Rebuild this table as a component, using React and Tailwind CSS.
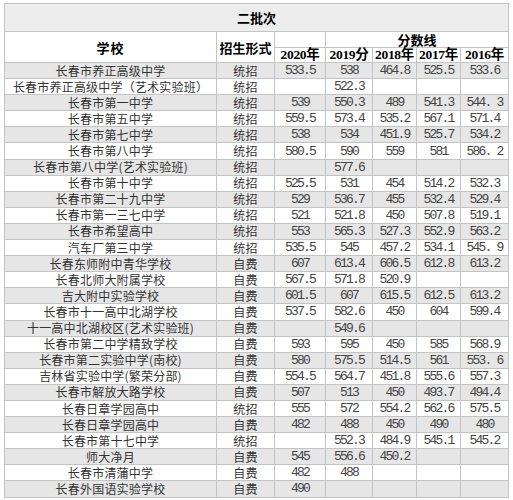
const rows = [
  ["长春市养正高级中学", "统招", "533.5", "538", "464.8", "525.5", "533.6"],
  ["长春市养正高级中学（艺术实验班）", "统招", "", "522.3", "", "", ""],
  ["长春市第一中学", "统招", "539", "550.3", "489", "541.3", "544. 3"],
  ["长春市第五中学", "统招", "559.5", "573.4", "535.2", "567.1", "571.4"],
  ["长春市第七中学", "统招", "538", "534", "451.9", "525.7", "534.2"],
  ["长春市第八中学", "统招", "580.5", "590", "559", "581", "586. 2"],
  ["长春市第八中学(艺术实验班)", "统招", "", "577.6", "", "", ""],
  ["长春市第十中学", "统招", "525.5", "531", "454", "514.2", "532.3"],
  ["长春市第二十九中学", "统招", "529", "536.7", "455", "532.4", "529.4"],
  ["长春市第一三七中学", "统招", "521", "521.8", "450", "507.8", "519.1"],
  ["长春市希望高中", "统招", "553", "565.3", "527.3", "552.9", "563.2"],
  ["汽车厂第三中学", "统招", "535.5", "545", "457.2", "534.1", "545. 9"],
  ["长春东师附中青华学校", "自费", "607", "613.4", "606.5", "612.8", "613.2"],
  ["长春北师大附属学校", "自费", "567.5", "571.8", "520.9", "", ""],
  ["吉大附中实验学校", "自费", "601.5", "607", "615.5", "612.5", "613.2"],
  ["长春市十一高中北湖学校", "自费", "537.5", "582.6", "450", "604", "599.4"],
  ["十一高中北湖校区(艺术实验班)", "自费", "", "549.6", "", "", ""],
  ["长春市第二中学精致学校", "自费", "593", "595", "450", "585", "568.9"],
  ["长春市第二实验中学(南校)", "自费", "580", "575.5", "514.5", "561", "553. 6"],
  ["吉林省实验中学(繁荣分部)", "自费", "554.5", "564.7", "451.8", "555.6", "557.3"],
  ["长春市解放大路学校", "自费", "507", "513", "450", "493.7", "494.4"],
  ["长春日章学园高中", "统招", "555", "572", "554.2", "562.6", "575.5"],
  ["长春日章学园高中", "自费", "482", "488", "450", "490", "480"],
  ["长春市第十七中学", "统招", "", "552.3", "484.9", "545.1", "545.2"],
  ["师大净月", "自费", "545", "556.6", "450.2", "", ""],
  ["长春市清蒲中学", "自费", "482", "488", "", "", ""],
  ["长春外国语实验学校", "自费", "490", "", "", "", ""],
];

const years = ["2020年", "2019分", "2018年", "2017年", "2016年"];

// shared cell look: right/bottom rule, centred text
const cell =
  "border-r border-b border-[#c4c4c4] flex items-center justify-center whitespace-pre leading-none";

export default function App() {
  return (
    <div className="w-[513px] h-[500px] bg-white pt-[3px] pl-[4px]">
      <div className="w-[506px] grid grid-cols-[212px_58px_51px_47px_44px_44px_48px] grid-rows-[28px_16px_15px_repeat(27,16.1px)] border-t border-l border-[#c4c4c4] text-[#222] font-['Noto_Sans_CJK_SC',sans-serif]">
        {/* title */}
        <div className={`${cell} col-span-7 bg-[#ededed] text-[13px] font-bold text-black`}>
          二批次
        </div>

        {/* header */}
        <div className={`${cell} row-span-2 text-[13px] font-bold text-black tracking-[1px]`}>
          学校
        </div>
        <div className={`${cell} row-span-2 text-[13px] font-bold text-black`}>
          招生形式
        </div>
        <div className={cell}></div>
        <div className={`${cell} col-span-4 text-[13px] font-bold text-black`}>
          分数线
        </div>
        {years.map((y) => (
          <div
            key={y}
            className={`${cell} text-[13.5px] font-bold text-black tracking-[-0.3px] font-['Liberation_Serif','Noto_Sans_CJK_SC',serif]`}
          >
            {y}
          </div>
        ))}

        {/* data rows */}
        {rows.map((r, i) => {
          const bg = i % 2 === 0 ? "bg-[#e6e6e6]" : "bg-white";
          return [
            <div key={`${i}-s`} className={`${cell} ${bg} text-[12px] tracking-[0.2px] text-[#333]`}>
              {r[0]}
            </div>,
            <div key={`${i}-t`} className={`${cell} ${bg} text-[12px] tracking-[0.3px] text-[#333]`}>
              {r[1]}
            </div>,
            ...r.slice(2).map((v, j) => (
              <div
                key={`${i}-${j}`}
                className={`${cell} ${bg} text-[13px] tracking-[-1.8px] text-[#444] font-['Liberation_Mono',monospace]`}
              >
                {v}
              </div>
            )),
          ];
        })}
      </div>
    </div>
  );
}
